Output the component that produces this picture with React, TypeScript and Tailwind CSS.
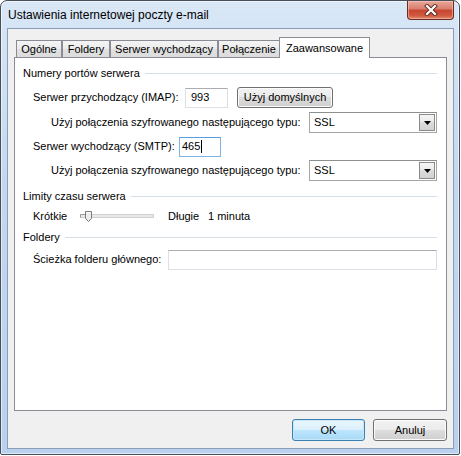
import React from "react";

const body = "font-['Liberation_Sans',Arial,sans-serif] text-[11px] leading-none text-black";

function GroupHeader({ title, className = "" }: { title: string; className?: string }) {
  return (
    <div className={`flex h-[14px] items-center pl-[8px] pr-[9px] ${className}`}>
      <span>{title}</span>
      <div className="ml-[5px] h-px flex-1 bg-[#d5dfe5]" />
    </div>
  );
}

function TextBox({ width, value, focused }: { width: string; value?: string; focused?: boolean }) {
  const frame = focused
    ? "border-[#7eb4ea] border-t-[#569de5] pl-[2px]"
    : "border-[#dbdfe6] border-t-[#abadb3] pl-[5px]";
  return (
    <div className={`flex h-[20px] items-center border bg-white ${frame} ${width}`}>
      {value}
      {focused && <span className="ml-px h-[13px] w-px bg-black" />}
    </div>
  );
}

function Combo() {
  return (
    <div className="flex h-[21px] w-[128px] items-center border border-[#a5a5a5] border-t-[#8e8f8f] bg-white">
      <span className="flex-1 pl-[4px]">SSL</span>
      <div className="mr-px flex h-[17px] w-[16px] items-center justify-center border border-[#8a8a8a] bg-[linear-gradient(#f6f6f6,#e8e8e8_50%,#dcdcdc_50%,#d2d2d2)]">
        <svg width="7" height="4" viewBox="0 0 7 4">
          <path d="M0 0h7L3.5 4z" fill="#000" />
        </svg>
      </div>
    </div>
  );
}

function Button({ children, width, primary }: { children: React.ReactNode; width: string; primary?: boolean }) {
  const look = primary
    ? "border-[#3c7fb1] bg-[linear-gradient(#eaf6fd,#d9f0fc_50%,#bee6fd_50%,#a7d9f5)] shadow-[inset_0_0_0_1px_#c7e6f8]"
    : "border-[#707070] bg-[linear-gradient(#f2f2f2,#ebebeb_50%,#dddddd_50%,#cfcfcf)] shadow-[inset_0_0_0_1px_#fcfcfc]";
  return (
    <div className={`flex items-center justify-center rounded-[3px] border ${look} ${width}`}>
      {children}
    </div>
  );
}

function Tab({ label, width, selected }: { label: string; width: string; selected?: boolean }) {
  if (selected) {
    return (
      <div
        className={`relative z-10 -mb-px -ml-px flex h-[21px] items-start justify-center border border-b-0 border-[#898c95] bg-white pt-[5px] ${width}`}
      >
        {label}
      </div>
    );
  }
  return (
    <div
      className={`flex h-[17px] items-center justify-center border border-b-0 border-[#898c95] bg-[linear-gradient(#f4f4f4,#ebebeb_50%,#e1e1e1_50%,#dcdcdc)] pt-px ${width}`}
    >
      {label}
    </div>
  );
}

function Slider() {
  return (
    <svg width="74" height="16" viewBox="0 0 74 16">
      <rect x="0.5" y="6.5" width="73" height="3" fill="#e7eaea" stroke="#d0d0d0" />
      <path d="M0.5 6.5h6" stroke="#9a9a9a" />
      <path d="M0.5 6.5v3" stroke="#9a9a9a" />
      <path d="M5.5 3.5h6v7l-3 3l-3-3z" fill="#ececec" stroke="#7a7a7a" />
      <path d="M6.5 4.5h4" stroke="#ffffff" />
    </svg>
  );
}

function CloseButton() {
  return (
    <div className="flex h-[19px] w-[47px] items-center justify-center rounded-b-[4px] border border-t-0 border-[#6b2a22] bg-[linear-gradient(#e9a99b,#d87c6b_45%,#c8442f_50%,#d0583e_80%,#e08a6a)] shadow-[inset_0_0_0_1px_rgba(255,210,200,0.5)]">
      <svg width="14" height="12" viewBox="0 0 14 12">
        <path d="M3 2l8 8M11 2l-8 8" stroke="#5a2a22" strokeWidth="4" strokeLinecap="square" />
        <path d="M3 2l8 8M11 2l-8 8" stroke="#ffffff" strokeWidth="2.2" strokeLinecap="square" />
      </svg>
    </div>
  );
}

export default function App() {
  return (
    <div className={`h-[456px] w-[461px] bg-white ${body}`}>
      <div className="flex h-[455px] w-[460px] flex-col rounded-t-[7px] rounded-b-[2px] border border-[#464f5a] bg-[linear-gradient(#d9e7f6,#c3d8f0_40%,#b9d1ee)] shadow-[inset_0_0_0_1px_rgba(255,255,255,0.55)]">
        {/* title bar */}
        <div className="flex h-[27px] items-start justify-between pl-[7px] pr-[5px]">
          <span className="pt-[8px] text-[12px] font-['Liberation_Sans',Arial,sans-serif]">
            Ustawienia internetowej poczty e-mail
          </span>
          <CloseButton />
        </div>

        {/* client area */}
        <div className="ml-[6px] mr-[5px] flex h-[421px] flex-col border border-[#8a9eb8] bg-[#f0f0f0] px-[6px] pt-[8px]">
          <div className="flex h-[20px] items-end pl-[2px]">
            <Tab label="Ogólne" width="w-[46px]" />
            <Tab label="Foldery" width="w-[48px]" />
            <Tab label="Serwer wychodzący" width="w-[108px]" />
            <Tab label="Połączenie" width="w-[62px]" />
            <Tab label="Zaawansowane" width="w-[91px]" selected />
          </div>

          <div className="flex h-[354px] flex-col border border-[#898c95] bg-white pt-[8px]">
            <GroupHeader title="Numery portów serwera" />

            <div className="mt-[7px] flex h-[21px] items-center pl-[18px]">
              <span className="w-[152px]">Serwer przychodzący (IMAP):</span>
              <TextBox width="w-[43px]" value="993" />
              <div className="ml-[9px] flex h-[21px]">
                <Button width="w-[96px]">Użyj domyślnych</Button>
              </div>
            </div>

            <div className="mt-[4px] flex h-[21px] items-center pl-[36px] pr-[9px]">
              <span className="flex-1">Użyj połączenia szyfrowanego następującego typu:</span>
              <Combo />
            </div>

            <div className="mt-[3px] flex h-[21px] items-center pl-[18px]">
              <span className="w-[146px]">Serwer wychodzący (SMTP):</span>
              <TextBox width="w-[42px]" value="465" focused />
            </div>

            <div className="mt-[3px] flex h-[21px] items-center pl-[36px] pr-[9px]">
              <span className="flex-1">Użyj połączenia szyfrowanego następującego typu:</span>
              <Combo />
            </div>

            <GroupHeader title="Limity czasu serwera" className="mt-[8px]" />

            <div className="mt-[5px] flex h-[16px] items-center pl-[18px]">
              <span className="w-[47px]">Krótkie</span>
              <Slider />
              <span className="ml-[14px] w-[40px]">Długie</span>
              <span>1 minuta</span>
            </div>

            <GroupHeader title="Foldery" className="mt-[6px]" />

            <div className="mt-[5px] flex h-[21px] items-center pl-[18px] pr-[9px]">
              <span className="w-[135px]">Ścieżka folderu głównego:</span>
              <div className="flex-1">
                <TextBox width="w-full" />
              </div>
            </div>
          </div>

          <div className="mt-[8px] flex h-[22px] justify-end gap-[8px]">
            <Button width="w-[73px]" primary>
              OK
            </Button>
            <Button width="w-[74px]">Anuluj</Button>
          </div>
        </div>
      </div>
    </div>
  );
}
